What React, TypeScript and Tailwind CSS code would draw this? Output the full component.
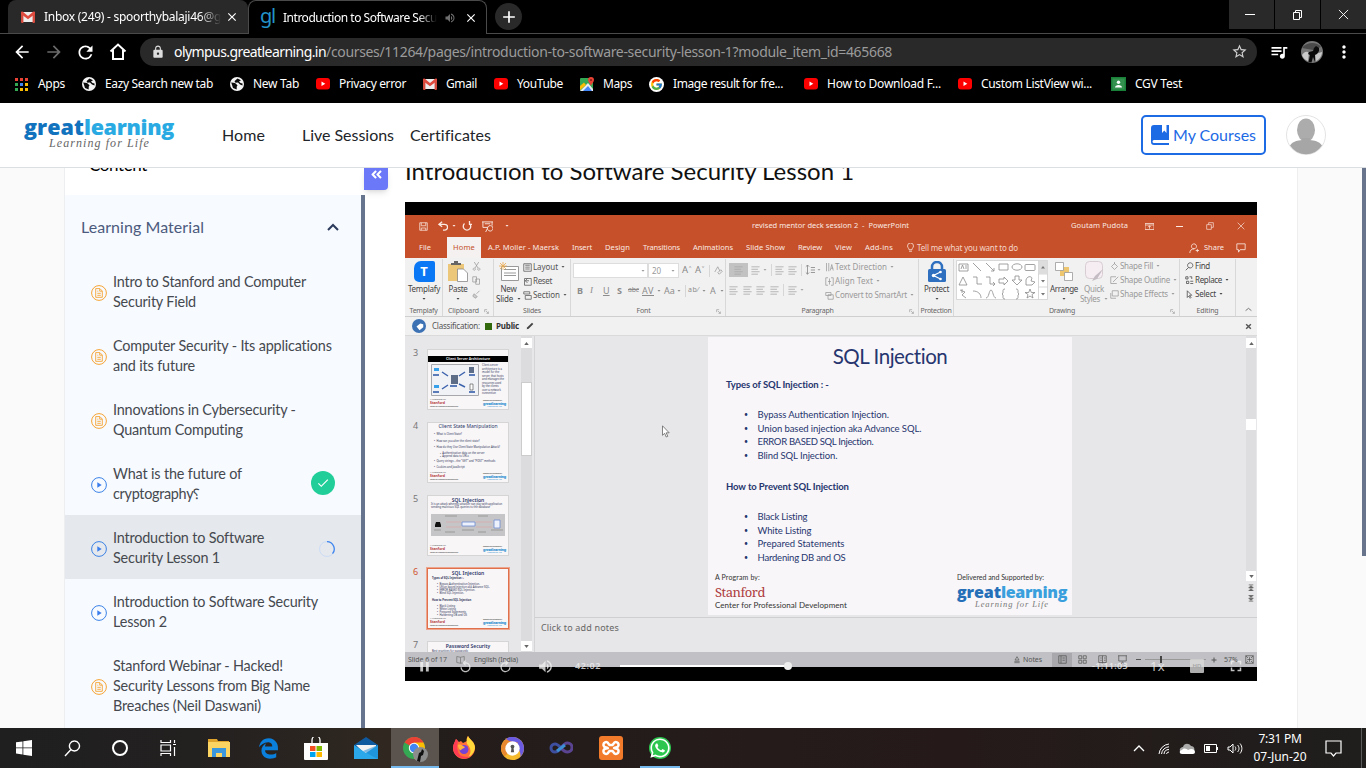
import { useLayoutEffect, useRef, useState } from "react";
import type { ReactNode } from "react";
import {
  MdArrowBack, MdArrowForward, MdRefresh, MdLock, MdStarBorder, MdQueueMusic, MdMoreVert,
  MdClose, MdAdd, MdVolumeUp, MdPause, MdReplay, MdFullscreen, MdCheck,
} from "react-icons/md";
import { FcGoogle } from "react-icons/fc";
import { FaAngleDoubleLeft, FaWhatsapp, FaEdgeLegacy } from "react-icons/fa";

/* Single line of text whose tracking is computed so that it fills a given width. */
function Fit({ w, className = "", children }: { w: number; className?: string; children: string }) {
  const ref = useRef<HTMLSpanElement>(null);
  const [tracking, setTracking] = useState(0);
  useLayoutEffect(() => {
    const el = ref.current;
    if (!el) return;
    const prev = el.style.letterSpacing;
    el.style.letterSpacing = "0px";
    const natural = el.getBoundingClientRect().width;
    el.style.letterSpacing = prev;
    setTracking((w - natural) / children.length);
  }, [w, children]);
  return (
    <span ref={ref} className={`inline-block w-max shrink-0 whitespace-pre ${className}`} style={{ letterSpacing: `${tracking}px` }}>
      {children}
    </span>
  );
}

/* Line icon on a small grid. */
function Ico({ d, box = "0 0 12 12", className = "", sw = 1, fill = "none" }: { d: string; box?: string; className?: string; sw?: number; fill?: string }) {
  return (
    <svg viewBox={box} className={`shrink-0 ${className}`} fill={fill} stroke="currentColor" strokeWidth={sw}>
      <path d={d} />
    </svg>
  );
}

/* ---------- Browser ---------- */

const GmailIcon = () => (
  <svg viewBox="0 0 14 12" className="h-3 w-3.5 shrink-0">
    <path d="M1 1h12v10H1z" fill="#eee" />
    <path d="M0 1.2h2.4V12H1a1 1 0 0 1-1-1zM11.6 1.2H14V11a1 1 0 0 1-1 1h-1.4z" fill="#d54b3d" />
    <path d="M0 1.5C0 .5 1 .2 1.8.8L7 5 12.200.8C13 .2 14 .5 14 1.500V3L7 8.200 0 3z" fill="#e04b3f" />
  </svg>
);
const YtIcon = () => (
  <svg viewBox="0 0 14 12" className="h-3 w-3.5 shrink-0">
    <rect width="14" height="11.500" rx="3" fill="#f00" />
    <path d="M5.500 3.500v4.600L9.300 5.800z" fill="#fff" />
  </svg>
);
const GlobeIcon = () => (
  <svg viewBox="0 0 14 14" className="size-3.5 shrink-0">
    <circle cx="7" cy="7" r="7" fill="#f4f4f4" />
    <path d="M1.200 5.500 5 6l2.500 2.200-.8 1.500v2.800L3 11zM7.500 1.500 5.500 3.200 4.500 4.200l1 1.600 2.500-.2L10 7.500l2.500 1V6.500L10.500 6 9 4.500 11 3.300z" fill="#0a0a0a" />
  </svg>
);
const MapsIcon = () => (
  <svg viewBox="0 0 14 14" className="size-3.5 shrink-0">
    <rect y="1" width="13" height="13" rx="1" fill="#34a853" />
    <path d="M0 14 8 6l5 6v2z" fill="#e8eaed" />
    <path d="M3 14 8 9l4 5z" fill="#4285f4" />
    <path d="M0 9 4 5.500 6 8 0 13z" fill="#fbbc04" />
    <path d="M11 0a3 3 0 0 1 3 3c0 2-2 3-3 6-1-3-3-4-3-6a3 3 0 0 1 3-3z" fill="#ea4335" />
    <circle cx="11" cy="3" r="1" fill="#7b1d15" />
  </svg>
);
const AppsIcon = () => (
  <svg viewBox="0 0 13 13" className="size-[13px] shrink-0">
    {["#ea4335", "#ea4335", "#ea4335", "#34a853", "#4285f4", "#fbbc04", "#34a853", "#fbbc04", "#fbbc04"].map((c, i) => (
      <rect key={i} x={(i % 3) * 5} y={Math.floor(i / 3) * 5} width="3" height="3" fill={c} />
    ))}
  </svg>
);
const ClassIcon = () => (
  <svg viewBox="0 0 15 14" className="h-3.5 w-[15px] shrink-0">
    <rect width="15" height="14" fill="#188038" />
    <rect x="1.500" y="1.500" width="12" height="11" fill="#34904f" />
    <circle cx="7.500" cy="5.200" r="1.700" fill="#fff" />
    <path d="M4 10.500c0-3.500 7-3.500 7 0z" fill="#fff" />
  </svg>
);

const bookmarks: { icon: ReactNode; text: string; w: number; cell: string; gap: string }[] = [
  { icon: <AppsIcon />, text: "Apps", w: 27, cell: "w-[67px]", gap: "gap-2.5" },
  { icon: <GlobeIcon />, text: "Eazy Search new tab", w: 108, cell: "w-[148px]", gap: "gap-[9px]" },
  { icon: <GlobeIcon />, text: "New Tab", w: 46, cell: "w-[86px]", gap: "gap-[9px]" },
  { icon: <YtIcon />, text: "Privacy error", w: 67, cell: "w-[107px]", gap: "gap-[9px]" },
  { icon: <GmailIcon />, text: "Gmail", w: 31, cell: "w-[71px]", gap: "gap-[9px]" },
  { icon: <YtIcon />, text: "YouTube", w: 46, cell: "w-[86px]", gap: "gap-[9px]" },
  { icon: <MapsIcon />, text: "Maps", w: 29, cell: "w-[69px]", gap: "gap-[9px]" },
  { icon: <span className="flex size-[15px] items-center justify-center rounded-full bg-white"><FcGoogle size={13} /></span>, text: "Image result for fre...", w: 110, cell: "w-[155px]", gap: "gap-[9px]" },
  { icon: <YtIcon />, text: "How to Download F...", w: 114, cell: "w-[154px]", gap: "gap-[9px]" },
  { icon: <YtIcon />, text: "Custom ListView wi...", w: 111, cell: "w-[153px]", gap: "gap-[9px]" },
  { icon: <ClassIcon />, text: "CGV Test", w: 47, cell: "w-[100px]", gap: "gap-[9px]" },
];

const Photo = ({ className }: { className: string }) => (
  <svg viewBox="0 0 22 22" className={`shrink-0 ${className}`}>
    <circle cx="11" cy="11" r="11" fill="#777" />
    <path d="M1 7C5 1 16 0 20 6L12 9z" fill="#4a4a4a" />
    <path d="M1 14c3-4 5-4 7-2l-1 8c-3-1-5-3-6-6zM14 13l7-2c0 4-3 8-6 9z" fill="#c9c9c9" />
    <path d="M7.500 21 9 14l-2-1 1-2 4-1 1-3 2-2 3 2v3l-2 3-2 1v7l-2-5-1.500 5.500z" fill="#0a0a0a" />
  </svg>
);

function Browser() {
  return (
    <div className="flex h-[103px] shrink-0 flex-col bg-black font-['Noto_Sans',sans-serif] text-white">
      <div className="flex h-[34px] items-stretch border-b border-[#4a4a4a] pl-2">
        <div className="flex w-60 items-center rounded-t-lg bg-[#292929] pl-[13px]">
          <GmailIcon />
          <div className="ml-[9px] w-[177px] overflow-hidden text-[12px] leading-4 [mask-image:linear-gradient(to_right,black_88%,transparent)]">
            <Fit w={177}>Inbox (249) - spoorthybalaji46@g</Fit>
          </div>
          <MdClose size={14} className="ml-[4px] shrink-0" />
        </div>
        <div className="-mb-px flex w-[239px] items-center rounded-t-lg border border-b-0 border-[#4a4a4a] bg-black pl-[11px]">
          <div className="flex h-5 w-[15px] shrink-0 text-[20px] leading-[16px] text-[#2392c9]"><Fit w={15}>gl</Fit></div>
          <div className="ml-[8px] w-[154px] overflow-hidden text-[12px] leading-4 [mask-image:linear-gradient(to_right,black_88%,transparent)]">
            <Fit w={154}>Introduction to Software Secu</Fit>
          </div>
          <MdVolumeUp size={12} className="ml-[7px] shrink-0 text-[#6e6e6e]" />
          <MdClose size={14} className="ml-[8px] shrink-0" />
        </div>
        <div className="ml-2 mt-[3px] flex size-[27px] items-center justify-center rounded-full bg-[#292929]">
          <MdAdd size={20} />
        </div>
        <div className="ml-auto flex h-[29px] gap-px">
          <div className="flex w-[45px] items-center justify-center bg-[#292929]"><div className="mr-[3px] h-px w-[10px] bg-white" /></div>
          <div className="flex w-[45px] items-center justify-center bg-[#292929]"><Ico d="M1.500 3.500h6v7h-6zM3.500 3.500v-2h6v7h-2" className="size-3" /></div>
          <div className="flex w-[45px] items-center justify-center bg-[#292929]"><Ico d="M1 1l10 10M11 1 1 11" className="mr-px size-[11px]" /></div>
        </div>
      </div>
      <div className="flex h-9 items-center pl-3">
        <MdArrowBack size={20} />
        <MdArrowForward size={20} className="ml-3 text-[#6b6b6b]" />
        <MdRefresh size={21} className="ml-[11px]" />
        <Ico d="M1.500 8.500 9 1.500l7.500 7M4 7v9h10V7" box="0 0 18 18" sw={2} className="ml-[13px] size-[18px]" />
        <div className="ml-[13px] flex h-7 w-[1117px] items-center rounded-full bg-[#292929] pb-px pl-[11px] text-[14px]">
          <MdLock size={14} className="text-[#dcdcdc]" />
          <Fit w={152} className="ml-[9px]">olympus.greatlearning.in</Fit>
          <Fit w={566} className="text-[#9b9b9b]">/courses/11264/pages/introduction-to-software-security-lesson-1?module_item_id=465668</Fit>
          <MdStarBorder size={17} className="ml-auto mr-[9px] text-[#d0d0d0]" />
        </div>
        <MdQueueMusic size={20} className="ml-3" />
        <Photo className="ml-[12px] size-[22px]" />
        <MdMoreVert size={20} className="ml-[11px]" />
      </div>
      <div className="flex h-[33px] items-center pb-[5px] pl-[15px] text-[12px]">
        {bookmarks.map((b, i) => (
          <div key={i} className={`flex shrink-0 items-center ${b.cell} ${b.gap}`}>
            {b.icon}
            <Fit w={b.w}>{b.text}</Fit>
          </div>
        ))}
      </div>
    </div>
  );
}

/* ---------- Site header and sidebar ---------- */

function SiteHeader() {
  return (
    <header className="z-10 flex h-[65px] shrink-0 items-start border-b border-[#dcdfe2] bg-white text-[16px] text-[#212529]">
      <div className="ml-6 mt-[13px] flex w-[152px] flex-col">
        <div className="flex h-[21px] text-[21.500px] leading-[21px] font-extrabold font-['Open_Sans',sans-serif]">
          <Fit w={60} className="text-[#1173bd]">great</Fit>
          <Fit w={90} className="text-[#29aae2]">learning</Fit>
        </div>
        <div className="ml-[25px] flex h-[12px] text-[12px] leading-[12px] text-[#666] italic font-['Liberation_Serif',serif]">
          <Fit w={101}>Learning for Life</Fit>
        </div>
      </div>
      <nav className="ml-[46px] mt-5 flex leading-6">
        <Fit w={43}>Home</Fit>
        <Fit w={92} className="ml-[37px]">Live Sessions</Fit>
        <Fit w={81} className="ml-4">Certificates</Fit>
      </nav>
      <div className="ml-auto mt-3 flex h-10 w-[125px] items-center rounded-[5px] border-2 border-[#1d6ae5] pl-2 text-[#1d6ae5]">
        <svg viewBox="0 0 18 20" className="h-5 w-[18px]" fill="#1d6ae5">
          <path d="M3 0h8v8l2.300-2.500L15.500 8V0H18v15H3a1.500 1.500 0 0 0 0 3h15v2H3a3 3 0 0 1-3-3V3a3 3 0 0 1 3-3z" />
        </svg>
        <Fit w={83} className="ml-1">My Courses</Fit>
      </div>
      <svg viewBox="0 0 40 40" className="ml-5 mr-10 mt-3 size-10">
        <circle cx="20" cy="20" r="19.500" fill="#fff" stroke="#e3e3e3" />
        <ellipse cx="20" cy="15" rx="9" ry="11.500" fill="#acacac" />
        <path d="M16 23v2c-4 .5-9 1-12 5.500a19 19 0 0 0 32 0c-3-4.500-8-5-12-5.500v-2z" fill="#a6a6a6" />
      </svg>
    </header>
  );
}

const DocIcon = () => (
  <svg viewBox="0 0 16 16" className="size-4 shrink-0" fill="none" stroke="#f6a433">
    <circle cx="8" cy="8" r="7.400" />
    <path d="M4.700 3.600h4.200l2.400 2.400v6.300H4.700zM8.700 3.800V6.200H11M6.300 6.200h1M6.300 8.300h3.500M6.300 10.300h3.500" strokeWidth=".9" />
  </svg>
);
const PlayIcon = () => (
  <svg viewBox="0 0 16 16" className="size-4 shrink-0" fill="none" stroke="#3b82e6">
    <circle cx="8" cy="8" r="7.400" />
    <path d="M6.300 5.300v5.400L10.700 8z" fill="#3b7ded" stroke="none" />
  </svg>
);

const lessons: { lines: [string, number][]; doc?: boolean; state?: "done" | "busy" }[] = [
  { lines: [["Intro to Stanford and Computer", 193], ["Security Field", 83]], doc: true },
  { lines: [["Computer Security - Its applications", 219], ["and its future", 82]], doc: true },
  { lines: [["Innovations in Cybersecurity -", 183], ["Quantum Computing", 130]], doc: true },
  { lines: [["What is the future of", 129], ["cryptography⸮", 86]], state: "done" },
  { lines: [["Introduction to Software", 151], ["Security Lesson 1", 107]], state: "busy" },
  { lines: [["Introduction to Software Security", 205], ["Lesson 2", 54]] },
  { lines: [["Stanford Webinar - Hacked!", 170], ["Security Lessons from Big Name", 197], ["Breaches (Neil Daswani)", 148]], doc: true },
];

function Sidebar() {
  return (
    <aside className="flex w-[301px] shrink-0 flex-col border-l border-[#eceef0] bg-white">
      <div className="flex h-[27px] shrink-0 items-start overflow-hidden pl-6">
        <Fit w={58} className="-mt-[15px] text-[17px] leading-6 text-black">Content</Fit>
      </div>
      <div className="flex grow border-r-4 border-[#67748e] bg-[#f7faff]">
        <div className="grow">
          <div className="flex h-16 items-center pl-4 pr-[22px] text-[16px] text-[#4c5b7d]">
            <Fit w={123}>Learning Material</Fit>
            <Ico d="M1 7 6 2l5 5" box="0 0 12 9" sw={2} className="ml-auto h-[9px] w-3 text-[#2c3a5c]" />
          </div>
          {lessons.map((l, i) => (
            <div key={i} className={`flex items-center pb-[11px] pl-[26px] pt-[13px] ${l.state === "busy" ? "bg-[#e5e8ec]" : ""}`}>
              <div className="mt-px">{l.doc ? <DocIcon /> : <PlayIcon />}</div>
              <div className="ml-1.5 flex flex-col text-[14.400px] leading-5 text-[#45494f]">
                {l.lines.map(([t, w]) => <div key={t} className="h-5"><Fit w={w}>{t}</Fit></div>)}
              </div>
              {l.state === "done" && (
                <div className="-mt-[3px] ml-auto mr-[26px] flex size-6 items-center justify-center rounded-full bg-[#21ce99] text-white">
                  <MdCheck size={14} />
                </div>
              )}
              {l.state === "busy" && (
                <svg viewBox="0 0 16 16" className="ml-auto mr-[26px] mt-px size-4" fill="none">
                  <circle cx="8" cy="8" r="7.500" stroke="#cddcf6" />
                  <path d="M8 .7a7.300 7.300 0 0 1 5.500 12" stroke="#3f86ee" strokeWidth="1.300" />
                </svg>
              )}
            </div>
          ))}
        </div>
      </div>
    </aside>
  );
}

/* ---------- Video: slide deck editor ---------- */

function Group({ w, label, lw, launcher, children }: { w: string; label: string; lw: number; launcher?: boolean; children: ReactNode }) {
  return (
    <div className={`flex h-[57px] shrink-0 flex-col border-r border-[#d8d8d8] ${w}`}>
      <div className="flex h-[47px]">{children}</div>
      <div className="flex h-[10px] items-center text-[7px] leading-[10px] text-[#666]">
        <span className="flex grow justify-center"><Fit w={lw}>{label}</Fit></span>
        {launcher && <Ico d="M1 5V1h4M3 3l4 4M7 4v3H4" box="0 0 8 8" className="mr-1 size-[5px] text-[#999]" />}
      </div>
    </div>
  );
}
const Down = ({ className = "text-[#666]" }: { className?: string }) => (
  <Ico d="M0 0h6L3 3.500z" box="0 0 6 4" fill="currentColor" sw={0} className={`h-[2px] w-[4px] ${className}`} />
);
function Big({ icon, label, w, sub, className = "text-[#444]" }: { icon: ReactNode; label: string; w: number; sub?: [string, number]; className?: string }) {
  return (
    <div className={`flex flex-col items-center text-[8px] leading-[10px] ${className}`}>
      <div className="flex h-[23px] items-center">{icon}</div>
      <Fit w={w} className="mt-px">{label}</Fit>
      <div className="flex h-[10px] items-center gap-1">{sub && <Fit w={sub[1]}>{sub[0]}</Fit>}<Down className="" /></div>
    </div>
  );
}
function Row({ icon, label, w, arrow, className = "text-[#555]" }: { icon: string; label: string; w: number; arrow?: boolean; className?: string }) {
  return (
    <div className={`flex h-[14px] items-center text-[8px] leading-[14px] ${className}`}>
      <Ico d={icon} className="mr-px size-[9px]" />
      <Fit w={w}>{label}</Fit>
      {arrow && <span className="ml-[3px] flex"><Down className="" /></span>}
    </div>
  );
}
const Sep = ({ className = "" }: { className?: string }) => <div className={`h-[12px] w-px shrink-0 bg-[#d6d6d6] ${className}`} />;
const Lines = ({ className = "" }: { className?: string }) => (
  <Ico d="M0 1h10M0 4h8M0 7h10M0 10h8" box="0 0 10 11" className={`h-[9px] w-[9px] text-[#aaa] ${className}`} />
);

function Ribbon() {
  const page = "M1 1h10v10H1zM3 3h6M3 5.500h6M3 8h6";
  return (
    <div className="flex h-[59px] shrink-0 border-b border-[#cfcfcf] bg-[#f2f1f1] pt-px">
      <Group w="w-[38px]" label="Templafy" lw={28}>
        <div className="pl-[3px] pt-px">
          <Big icon={<div className="flex size-[21px] items-center justify-center rounded-bl-[5px] rounded-br-[2px] rounded-tl-[7px] rounded-tr-[2px] bg-[#0a78f5] text-[13px] font-bold leading-none text-white">T</div>} label="Templafy" w={32} />
        </div>
      </Group>
      <Group w="w-[51px]" label="Clipboard" lw={31} launcher>
        <div className="flex gap-2 pl-[5px] pt-px">
          <Big
            icon={
              <svg viewBox="0 0 20 21" className="h-[21px] w-5">
                <path d="M0 3h16v17H0z" fill="#ecc679" />
                <path d="M3 4V2h3V0h4v2h3v2z" fill="#666" />
                <path d="M9.500 8h6l4 4v8.500h-10z" fill="#fff" stroke="#888" strokeWidth=".8" />
              </svg>
            }
            label="Paste" w={19}
          />
          <div className="-ml-1 flex flex-col text-[#9a9a9a]">
            <Ico d="M3 0l5 8M9 0 4 8M3 8a1.500 1.500 0 1 0 .1 0M9 8a1.500 1.500 0 1 0 .1 0" className="mt-[2px] size-[9px]" />
            <Ico d="M1 1h5v7H1zM5 4h5v7H5z" className="mt-[5px] size-[9px]" />
            <Ico d="M10 1 6 5M3 5l4 4-3 2-3-3z" fill="#ccc" className="mt-[5px] size-[9px]" />
          </div>
        </div>
      </Group>
      <Group w="w-[77px]" label="Slides" lw={18}>
        <div className="flex gap-[2px] pl-[2px] pt-px">
          <Big
            icon={
              <svg viewBox="0 0 20 20" className="size-5" fill="none" stroke="#999">
                <path d="M2.500 4.500h17v14h-17z" fill="#fff" />
                <path d="M5 7.500h12M5 11h12M5 13.500h12" strokeWidth="1.200" />
                <path d="M4 0v8M0 4h8M1 1l6 6M7 1 1 7" stroke="#eaa84b" strokeWidth=".8" />
              </svg>
            }
            label="New" w={16} sub={["Slide", 17]}
          />
          <div className="flex flex-col">
            <Row icon={page} label="Layout" w={25} arrow />
            <Row icon="M2 2h9v9H2zM6 8 3 5l3-3M3 5h5" label="Reset" w={19} />
            <Row icon="M1 1h8v3H1zM3 6h8v5H3z" label="Section" w={27} arrow />
          </div>
        </div>
      </Group>
      <Group w="w-[155px]" label="Font" lw={14} launcher>
        <div className="flex flex-col pl-[2px] pt-px text-[#999]">
          <div className="mt-[3px] flex h-[15px] items-center">
            <div className="flex h-[15px] w-[75px] items-center justify-end border border-[#ddd] bg-white pr-[2px]"><Down className="" /></div>
            <div className="flex h-[15px] w-[31px] items-center justify-between border border-[#ddd] bg-white px-[3px] text-[8px]">20<Down className="" /></div>
            <Fit w={23} className="ml-[3px] text-[9.500px] text-[#888]">A˄ A˅</Fit>
            <Sep className="ml-[4px]" />
            <Ico d="M1 8 5 1l3 6M5 9l4-4 2 2-4 4z" className="ml-[4px] size-[9px]" />
          </div>
          <div className="mt-[4px] flex h-[17px] items-center text-[9px] text-[#8c8c8c]">
            <b className="ml-[4px] w-[13px]">B</b>
            <i className="w-[13px] font-['Liberation_Serif',serif]">I</i>
            <u className="w-[14px]">U</u>
            <b className="w-[11px]">S</b>
            <Fit w={11} className="text-[7px] line-through">abc</Fit>
            <Fit w={12} className="ml-[3px] underline">AV</Fit>
            <span className="ml-[3px]"><Down className="" /></span>
            <Fit w={11} className="ml-[3px]">Aa</Fit>
            <span className="ml-[2px]"><Down className="" /></span>
            <Sep className="ml-[4px]" />
            <Fit w={11} className="ml-[2px] text-[7px]">ab⁄</Fit>
            <span className="ml-[3px]"><Down className="" /></span>
            <span className="ml-[4px] text-[9px]">A</span>
            <span className="ml-[4px]"><Down className="" /></span>
          </div>
        </div>
      </Group>
      <Group w="w-[193px]" label="Paragraph" lw={32} launcher>
        <div className="flex w-[99px] flex-col pl-[3px] pt-px text-[#a5a5a5]">
          <div className="mt-[3px] flex h-[14px] items-center">
            <div className="flex h-[14px] w-[19px] items-center justify-center bg-[#c2c2c2]"><Lines className="text-[#888]" /></div>
            <Lines className="ml-[3px]" /><span className="ml-[3px]"><Down className="" /></span>
            <Sep className="ml-[4px]" />
            <Lines className="ml-[3px]" /><Lines className="ml-[4px]" />
            <Sep className="ml-[4px]" />
            <Ico d="M3 0v11M1 2l2-2 2 2M1 9l2 2 2-2M7 3h5M7 6h5M7 9h5" className="ml-[3px] size-[10px] text-[#888]" />
            <span className="ml-[2px]"><Down className="" /></span>
          </div>
          <div className="mt-[6px] flex h-[14px] items-center">
            <Lines /><Lines className="ml-[5px]" /><Lines className="ml-[4px]" /><Lines className="ml-[5px]" />
            <Sep className="ml-[4px]" />
            <Lines className="ml-[4px]" /><span className="ml-[3px]"><Down className="" /></span>
          </div>
        </div>
        <div className="flex flex-col pt-px">
          <Row className="text-[#999]" icon="M2 0v11M5 0v11M7 10 9 2l2 8M8 7h3" label="Text Direction" w={52} arrow />
          <Row className="text-[#999]" icon="M1 1v10h3M1 1h3M11 1v10H8M11 1H8M6 2v8M4 6h4" label="Align Text" w={38} arrow />
          <Row className="text-[#999]" icon="M1 2h7v4H1zM4 5h7v6H4z" label="Convert to SmartArt" w={72} arrow />
        </div>
      </Group>
      <Group w="w-[35px]" label="Protection" lw={31}>
        <div className="pl-[5px] pt-px">
          <Big
            icon={
              <svg viewBox="0 0 18 22" className="h-[22px] w-[18px]">
                <path d="M4 10V6a5 5 0 0 1 10 0v4" fill="none" stroke="#2f6fc0" strokeWidth="2.500" />
                <rect y="8" width="18" height="13" rx="1.500" fill="#2f6fc0" />
                <path d="M12.500 11 5.500 14.500l7 3.500" fill="none" stroke="#fff" strokeWidth="1.300" />
                <circle cx="5.500" cy="14.500" r="1.700" fill="#fff" /><circle cx="12.500" cy="11" r="1.300" fill="#fff" /><circle cx="12.500" cy="18" r="1.300" fill="#fff" />
              </svg>
            }
            label="Protect" w={25}
          />
        </div>
      </Group>
      <Group w="w-[226px]" label="Drawing" lw={26} launcher>
        <svg viewBox="0 0 92 40" className="ml-[2px] mt-px h-10 w-[92px] shrink-0" fill="none" stroke="#8a8a8a" strokeWidth=".8">
          <path d="M.5.5h91v39H.5z" fill="#fff" stroke="#cfcfcf" />
          <path d="M82.500.5v39M82.500 14h9M82.500 27h9" stroke="#cfcfcf" />
          <path d="M82.500 1h9v13h-9z" fill="#ddd" stroke="none" />
          <path d="M85 8.500h4l-2-2.500zM85 20h4l-2 2.500zM85 33h4l-2 2.500z" fill="#777" stroke="none" />
          <path d="M3 4h9v7H3zM5 9l1.500-4L8 9M9 6h2M9 8h2M17 3l8 8M30 3l8 8v-3M38 11h-3M43 4h9v6h-9zM70 4.500h8a1 1 0 0 1 1 1v4a1 1 0 0 1-1 1h-8a1 1 0 0 1-1-1v-4a1 1 0 0 1 1-1z" />
          <ellipse cx="61" cy="7" rx="5" ry="3.200" />
          <path d="M3 25l4-8 4 8zM17 17h4v7h5M30 17h4v7h5M37 22l2 2-2 2M43 19h5v-2l4 4-4 4v-2h-5zM59 16h4v4h3l-5 5-5-5h3zM70 20c1-4 5-4 6-2l-1 3 4 1-3 3h-6z" />
          <path d="M4 30l5 2-3 3 4 3M6 29v4M17 31c5 0 8 3 8 7M30 38c3 0 3-8 5-8s2 8 5 8M49 29c-2 0-2 1-2 2v2l-1 1 1 1v2c0 1 0 2 2 2M60 29c2 0 2 1 2 2v2l1 1-1 1v2c0 1 0 2-2 2M74 29l1.300 3.500H79l-3 2 1 3.500-3-2-3 2 1-3.500-3-2h3.700z" />
        </svg>
        <div className="ml-[2px] flex gap-[2px] pt-px">
          <Big
            icon={
              <svg viewBox="0 0 18 19" className="h-[19px] w-[18px]" strokeWidth=".8">
                <path d="M5 5h9v9H5z" fill="#edc66f" />
                <path d="M.5.5h8v8h-8zM9.500 10.500h8v8h-8z" fill="#fff" stroke="#999" />
              </svg>
            }
            label="Arrange" w={28}
          />
          <Big
            className="text-[#999]"
            icon={
              <svg viewBox="0 0 19 21" className="h-[21px] w-[19px]">
                <rect x=".5" y=".5" width="17" height="17" rx="4" fill="#f5edf2" stroke="#d7cdd3" />
                <path d="M18 8 10 15l-3 5 5-2z" fill="#c4bcc2" />
              </svg>
            }
            label="Quick" w={20} sub={["Styles", 20]}
          />
        </div>
        <div className="ml-[2px] flex flex-col">
          <Row className="text-[#999]" icon="M2 6l4-4 4 4-4 4zM6 0v3" label="Shape Fill" w={33} arrow />
          <Row className="text-[#999]" icon="M1 1h7M1 1v9h8M4 8l7-7" label="Shape Outline" w={50} arrow />
          <Row className="text-[#999]" icon="M3 1h8v7H3zM1 4v7h7" label="Shape Effects" w={48} arrow />
        </div>
      </Group>
      <Group w="w-[56px]" label="Editing" lw={22}>
        <div className="flex flex-col pl-[5px]">
          <Row className="text-[#444]" icon="M7 1a3.500 3.500 0 1 1-.1 0M5 7l-4 4" label="Find" w={15} />
          <Row className="text-[#444]" icon="M1 1h3v3H1zM6 1h3v3M2 7h3v3H2zM7 7h4M7 10h4" label="Replace" w={27} arrow />
          <Row className="text-[#444]" icon="M3 1v9l2-2 2 3 1-1-2-3h3z" label="Select" w={21} arrow />
        </div>
      </Group>
      <Ico d="M1 6l5-4 5 4" box="0 0 12 8" sw={1.500} className="mb-1 ml-[9px] mt-auto h-[5px] w-[7px] text-[#666]" />
    </div>
  );
}

const tabs: [string, number, string][] = [
  ["Insert", 20, "ml-[13px]"], ["Design", 25, "ml-[13px]"], ["Transitions", 37, "ml-[13px]"], ["Animations", 40, "ml-[13px]"],
  ["Slide Show", 39, "ml-[13px]"], ["Review", 24, "ml-[13px]"], ["View", 17, "ml-[13px]"], ["Add-ins", 28, "ml-[13px]"],
];

function TitleBar() {
  return (
    <div className="h-[43px] shrink-0 bg-[#c5502a] text-[7.500px] text-[#fbe9e2]">
      <div className="flex h-[22px] items-center pl-[14px]">
        <Ico d="M1 1h10v10H1zM3 1v4h6V1M3 11V8h6v3" className="size-[9px]" />
        <Ico d="M5 1 1 4l4 3M1 4h7a3 3 0 0 1 0 7H6" sw={1.600} className="ml-[10px] size-[10px]" />
        <span className="ml-[4px]"><Down className="" /></span>
        <Ico d="M3 3a4.500 4.500 0 1 0 6 0M9 0v4h3" sw={1.600} className="ml-[6px] size-[10px]" />
        <Ico d="M0 1h12M1 1v6h5M11 1v4M3 3h6M6 8l-2 4M9 5a3 3 0 1 1-.1 0" className="ml-[10px] size-[11px]" />
        <span className="ml-[12px]"><Down className="" /></span>
        <Fit w={157} className="ml-[243px]">revised mentor deck session 2  -  PowerPoint</Fit>
        <Fit w={57} className="ml-[162px]">Goutam Pudota</Fit>
        <Ico d="M0 2h12v8H0zM0 4h12M6 9V5M4 7l2-2 2 2" className="ml-[17px] size-[9px]" />
        <div className="ml-[22px] h-px w-[7px] bg-[#fbe9e2]" />
        <Ico d="M1 4h7v7H1zM4 4V1h7v7H8" className="ml-[23px] size-[8px]" />
        <Ico d="M1 1l10 10M11 1 1 11" className="ml-[23px] size-[8px]" />
      </div>
      <div className="flex h-[21px] items-center pl-[14px]">
        <Fit w={12}>File</Fit>
        <div className="ml-[16px] flex h-[21px] w-[34px] items-center justify-center bg-[#f4f1f0] text-[#c5502a]"><Fit w={22}>Home</Fit></div>
        <Fit w={71} className="ml-[7px]">A.P. Moller - Maersk</Fit>
        {tabs.map(([t, w, m]) => <Fit key={t} w={w} className={m}>{t}</Fit>)}
        <Ico d="M4 9C4 7 2 6 2 4a4 4 0 0 1 8 0c0 2-2 3-2 5zM4 11h4" className="ml-[13px] size-[9px]" />
        <Fit w={101} className="ml-[2px] text-[8px] text-[#f6d5c9]">Tell me what you want to do</Fit>
        <Ico d="M6 1a3 3 0 1 1-.1 0M1 12c0-3 2-5 5-5M8 9h4M10 7v4" className="ml-[171px] size-[10px]" />
        <Fit w={20} className="ml-[5px]">Share</Fit>
        <Ico d="M1 1h10v7H5l-2 3V8H1z" className="ml-[12px] size-[10px]" />
      </div>
    </div>
  );
}

function ThumbFooter() {
  return (
    <div className="mt-auto flex h-[11px] shrink-0 items-end justify-between px-[2px] pb-px text-[2.500px] leading-[3px] text-[#444]">
      <div className="flex flex-col"><span>A Program by</span><span className="text-[3.500px] font-bold leading-[4px] text-[#b6383c]">Stanford</span><Fit w={28} className="text-[2px]">Center for Professional Development</Fit></div>
      <div className="flex flex-col text-[#2a8fd0]"><Fit w={19} className="text-[2px] text-[#444]">Delivered and Supported by</Fit><Fit w={23} className="text-[3.800px] font-extrabold leading-[4px]">greatlearning</Fit><span className="text-center text-[2px] italic leading-[2px]">Learning for Life</span></div>
    </div>
  );
}
function Thumb({ n, title, active, children }: { n: number; title?: string; active?: boolean; children: ReactNode }) {
  return (
    <div className="flex h-[73px] shrink-0 items-start pl-[8px]">
      <span className={`w-[14px] text-[9px] leading-[9px] ${active ? "text-[#d0532f]" : "text-[#777]"}`}>{n}</span>
      <div className={`mt-px flex h-[61px] w-[82px] flex-col bg-[#f8f6f7] ${active ? "border border-[#e0704c] outline outline-[#eda58d]" : "border border-[#d5d5d5]"}`}>
        {title && <div className="shrink-0 pt-[1px] text-center text-[5px] font-semibold leading-[6px] text-[#2c3768]">{title}</div>}
        {children}
      </div>
    </div>
  );
}
const Tiny = ({ items, className = "" }: { items: string[]; className?: string }) => (
  <div className={`flex shrink-0 flex-col whitespace-pre text-[2.700px] text-[#2f3558] ${className}`}>{items.map((t) => <span key={t}>{t}</span>)}</div>
);

function Thumbs() {
  return (
    <div className="flex w-[116px] shrink-0 flex-col overflow-hidden pt-[12px]">
      <Thumb n={3}>
        <div className="mt-[6px] h-[6px] shrink-0 bg-black text-center text-[3.500px] font-semibold leading-[6px] text-white">Client Server Architecture</div>
        <div className="mt-[2px] flex h-8 shrink-0">
          <svg viewBox="0 0 48 32" className="ml-[3px] h-8 w-12 shrink-0">
            <path d="M.5.5h47v31H.5z" fill="#f1f2f6" stroke="#a6a8ae" />
            <path d="M11 8l6 4M28 12l6-4M11 25l6-4M28 20l6 3" stroke="#3d63ad" strokeWidth="1.500" />
            <path d="M3 4h5v3H3zM3 21h5v3H3z" fill="#37a0ea" /><path d="M2 10h6v2H2zM2 27h6v2H2zM38 10h6v2h-6zM38 27h6v2h-6zM19 21h7v2h-7z" fill="#5b7ab8" />
            <path d="M38 3h5v6h-5zM20 11h7v9h-7z" fill="#5d6d88" /><path d="M39 20h3v6h-3z" fill="#fff" stroke="#444" strokeWidth=".6" />
          </svg>
          <Tiny className="ml-[3px] w-[25px] leading-[3.500px]" items={["Client-server", "architecture is a", "model for the", "server, that hosts", "and manages the", "resources used", "by the clients", "over a network", "connection"]} />
        </div>
        <ThumbFooter />
      </Thumb>
      <Thumb n={4}>
        <div className="shrink-0 text-center text-[5px] leading-[7px] text-[#2c3768]">Client State Manipulation</div>
        <Tiny className="mt-px pl-[6px] leading-[6.500px]" items={["•  What is Client State?", "•  How can you alter the client state?", "•  How do they Use Client State Manipulation Attack?"]} />
        <Tiny className="mt-px pl-[12px] leading-[3px]" items={["▪  Authentication data on the server", "▪  Append data to URLs"]} />
        <Tiny className="pl-[6px] leading-[6px]" items={["•  Query strings – the \"GET\" and \"POST\" methods", "•  Cookies and JavaScript"]} />
        <ThumbFooter />
      </Thumb>
      <Thumb n={5} title="SQL Injection">
        <Tiny className="px-[3px] leading-[3px]" items={["It is an attack whereby attacker can play with application", "sending malicious SQL queries to the database"]} />
        <svg viewBox="0 0 74 22" className="mx-auto mt-[5px] h-[22px] w-[74px] shrink-0">
          <path d="M0 0h74v22H0z" fill="#c5c5c7" />
          <path d="M5 8h4l1 3H4zM4 13h6v-2H4z" fill="#111" />
          <path d="M15 8h15M45 8h16M15 13h15M45 13h16" stroke="#dda3a8" strokeWidth=".6" />
          <path d="M31 8h13v4H31zM63 6h6v8h-6z" fill="#edf1fb" stroke="#6d8bd3" strokeWidth=".8" />
          <path d="M14 2h12M47 2h10M14 18h10M47 18h8M3 16h7M31 16h12M60 16h12" stroke="#999" />
        </svg>
        <ThumbFooter />
      </Thumb>
      <Thumb n={6} title="SQL Injection" active>
        <Tiny className="pl-[4px] font-bold leading-[5px]" items={["Types of SQL Injection :-"]} />
        <Tiny className="mt-[2px] pl-[9px] leading-[3px]" items={["•  Bypass Authentication Injection.", "•  Union based injection aka Advance SQL.", "•  ERROR BASED SQL Injection.", "•  Blind SQL Injection."]} />
        <Tiny className="mt-[3px] pl-[4px] font-bold leading-[5px]" items={["How to Prevent SQL Injection"]} />
        <Tiny className="mt-[2px] pl-[9px] leading-[3px]" items={["•  Black Listing", "•  White Listing", "•  Prepared Statements", "•  Hardening DB and OS"]} />
        <ThumbFooter />
      </Thumb>
      <Thumb n={7} title="Password Security">
        <Tiny className="pl-[4px] leading-[4px]" items={["Best practices for passwords"]} />
      </Thumb>
    </div>
  );
}

const Bullets = ({ items }: { items: [string, number][] }) => (
  <ul className="mt-[17px] flex flex-col pl-[36px] text-[9.500px] leading-[13.500px]">
    {items.map(([t, w]) => (
      <li key={t} className="flex h-[13.500px]"><span className="w-[13.500px] text-[7px]">•</span><Fit w={w}>{t}</Fit></li>
    ))}
  </ul>
);

function Slide() {
  return (
    <div className="flex h-[278px] w-[364px] shrink-0 flex-col bg-[#f8f6f8] font-[Lato,sans-serif] text-[#26356f]">
      <div className="mt-[5px] flex h-7 justify-center text-[20.500px] leading-7"><Fit w={115}>SQL Injection</Fit></div>
      <div className="mt-[8px] flex h-[13px] pl-[18px] text-[9.500px] font-bold leading-[13px]"><Fit w={103}>Types of SQL Injection : -</Fit></div>
      <Bullets items={[["Bypass Authentication Injection.", 132], ["Union based injection aka Advance SQL.", 164], ["ERROR BASED SQL Injection.", 116], ["Blind SQL Injection.", 80]]} />
      <div className="mt-[18px] flex h-[13px] pl-[18px] text-[9.500px] font-bold leading-[13px]"><Fit w={123}>How to Prevent SQL Injection</Fit></div>
      <Bullets items={[["Black Listing", 50], ["White Listing", 54], ["Prepared Statements", 87], ["Hardening DB and OS", 88]]} />
      <div className="mt-[7px] flex justify-between pl-[7px] pr-[5px] text-[#333]">
        <div className="flex flex-col">
          <Fit w={45} className="text-[7px] leading-[12px]">A Program by:</Fit>
          <Fit w={50} className="mt-[2px] h-[15px] text-[13px] leading-[15px] text-[#ae3c41] font-['Noto_Serif','Liberation_Serif',serif]">Stanford</Fit>
          <Fit w={132} className="text-[8px] leading-[11px]">Center for Professional Development</Fit>
        </div>
        <div className="flex w-[110px] flex-col">
          <Fit w={87} className="text-[7px] leading-[12px]">Delivered and Supported by:</Fit>
          <div className="flex h-[16px] text-[16px] font-extrabold leading-[18px] font-['Open_Sans',sans-serif]">
            <Fit w={44} className="text-[#256fb9]">great</Fit><Fit w={66} className="text-[#3a9fdd]">learning</Fit>
          </div>
          <Fit w={74} className="ml-[18px] text-[8.500px] italic leading-[10px] text-[#777] font-['Liberation_Serif',serif]">Learning for Life</Fit>
        </div>
      </div>
    </div>
  );
}

const ScrollBtn = ({ up }: { up?: boolean }) => (
  <div className="flex h-[10px] w-full shrink-0 items-center justify-center bg-white text-[#666]">
    <Ico d={up ? "M0 4h6L3 0z" : "M0 0h6L3 4z"} box="0 0 6 4" fill="currentColor" sw={0} className="h-[3px] w-[5px]" />
  </div>
);

function Video() {
  return (
    <div className="relative flex h-[479px] w-[852px] flex-col bg-black pt-[13px] font-['Noto_Sans',sans-serif]">
      <TitleBar />
      <Ribbon />
      <div className="flex h-[19px] shrink-0 items-center border-b border-[#dadada] bg-[#f1f1f1] pl-[7px] text-[8px] text-[#555]">
        <div className="flex size-[14px] items-center justify-center rounded-full bg-[#3c72b4] text-white"><Ico d="M2 6l5-4 4 1v4L6 11z" fill="#fff" sw={0} className="size-[9px]" /></div>
        <Fit w={48} className="ml-[6px]">Classification:</Fit>
        <div className="ml-[5px] size-[7px] bg-[#33690d]" />
        <Fit w={23} className="ml-[4px] font-bold text-[#333]">Public</Fit>
        <Ico d="M1 11l1-3 7-7 2 2-7 7z" fill="currentColor" sw={0} className="ml-[7px] size-[8px] text-[#444]" />
        <Ico d="M2 2l8 8M10 2l-8 8" sw={2.500} className="ml-auto mr-[5px] size-[7px]" />
      </div>
      <div className="flex h-[316px] shrink-0 bg-[#e7e6e8]">
        <Thumbs />
        <div className="flex w-[11px] shrink-0 flex-col bg-[#dcdcde] pt-[2px]">
          <ScrollBtn up /><div className="mt-[34px] h-[74px] border border-[#ccc] bg-white" /><div className="mt-auto pb-px"><ScrollBtn /></div>
        </div>
        <div className="ml-[2px] flex w-[723px] flex-col border-l border-[#d4d4d6]">
          <div className="flex h-[282px] border-b border-[#cfcfd1]">
            <div className="w-[128px] shrink-0 pt-[89px]">
              <svg viewBox="0 0 8 13" className="ml-[127px] h-[13px] w-2" fill="#fff" stroke="#666" strokeWidth=".8">
                <path d="M.5.8v9.500l2.200-2 1.500 3.700 1.600-.7-1.600-3.500h3z" />
              </svg>
            </div>
            <div className="ml-[45px] pt-px"><Slide /></div>
            <div className="ml-auto mr-px flex w-[10px] flex-col bg-[#dedee0] pt-[2px]">
              <ScrollBtn up /><div className="mt-[71px] h-[11px] shrink-0 bg-white" /><div className="mt-auto"><ScrollBtn /></div>
              <div className="flex h-[36px] shrink-0 flex-col items-center gap-[4px] bg-[#e7e6e8] pt-[3px] text-[#666]">
                <Ico d="M1 5l3-3 3 3zM1 9l3-3 3 3zM1 1h6" box="0 0 8 9" className="h-[7px] w-[6px]" fill="currentColor" />
                <Ico d="M1 0l3 3 3-3zM1 4l3 3 3-3zM1 8h6" box="0 0 8 9" className="h-[7px] w-[6px]" fill="currentColor" />
              </div>
            </div>
          </div>
          <Fit w={78} className="ml-[6px] mt-[3px] text-[9px] leading-[14px] text-[#666]">Click to add notes</Fit>
        </div>
      </div>
      <div className="flex h-[15px] shrink-0 items-center bg-[#c1c1c5] pl-[3px] text-[7px] leading-[14px] text-[#555]">
        <Fit w={39}>Slide 6 of 17</Fit>
        <Ico d="M1 2l5 1 5-1v8l-5 1-5-1zM6 3v8" className="ml-[9px] size-[9px] text-[#777]" />
        <Fit w={44} className="ml-[9px]">English (India)</Fit>
        <Ico d="M2 8h8M2 10h8M6 1 3 6h6z" className="ml-auto size-[8px]" />
        <Fit w={19} className="ml-[2px]">Notes</Fit>
        <div className="ml-[10px] flex h-[14px] w-5 items-center justify-center bg-[#a9a9ad]"><Ico d="M1 1h10v10H1zM4 1v10M6 4h3M6 7h3" className="size-[9px]" /></div>
        <Ico d="M1 1h4v4H1zM7 1h4v4H7zM1 7h4v4H1zM7 7h4v4H7z" className="ml-[6px] size-[9px]" />
        <Ico d="M1 1h10v9H1zM6 1v10M3 4h2M3 7h2M8 4h2M8 7h2" className="ml-[11px] size-[9px]" />
        <Ico d="M0 1h12M1 1v7h10V1M4 12l2-3 2 3" className="ml-[11px] size-[9px]" />
        <div className="ml-[9px] h-px w-[5px] bg-[#555]" />
        <div className="ml-[4px] flex h-[10px] w-[61px] items-center"><div className="h-px w-[15px] bg-[#999]" /><div className="h-[7px] w-[2px] bg-[#444]" /><div className="h-px grow bg-[#999]" /></div>
        <Ico d="M6 1v10M1 6h10" sw={2} className="ml-[5px] size-[6px]" />
        <Fit w={14} className="ml-[7px]">57%</Fit>
        <Ico d="M1 1h10v10H1zM3 6h6M6 3v6M1 1l3 3M11 1 8 4M1 11l3-3M11 11 8 8" className="ml-[7px] mr-[3px] size-[9px]" />
      </div>
      <div className="absolute inset-x-0 bottom-0 flex h-[30px] items-center text-[#f0f0f0]/80">
        <MdPause size={17} className="ml-[11px]" />
        <MdReplay size={15} className="ml-[25px]" />
        <MdReplay size={15} className="ml-[25px] -scale-x-100" />
        <MdVolumeUp size={17} className="ml-[24px]" />
        <Fit w={26} className="ml-[21px] text-[9px] font-semibold">42:02</Fit>
        <div className="ml-[19px] flex w-[172px] items-center"><div className="h-[2px] grow bg-white" /><div className="-ml-1 size-[8px] rounded-full bg-[#eee]" /></div>
        <Fit w={36} className="ml-[300px] text-[9px] font-semibold">-1:11:03</Fit>
        <Fit w={15} className="ml-[22px] text-[13px] leading-4">1x</Fit>
        <div className="ml-[25px] flex h-[14px] w-[14px] items-center justify-center rounded-[1px] bg-[#dadada]/80 text-[6px] font-semibold text-[#a5a5a5]">HD</div>
        <MdFullscreen size={18} className="ml-[23px]" />
      </div>
    </div>
  );
}

/* ---------- Taskbar ---------- */

const Cell = ({ children, className = "w-[49px]" }: { children: ReactNode; className?: string }) => (
  <div className={`flex h-10 shrink-0 items-center justify-center ${className}`}>{children}</div>
);

function Taskbar() {
  return (
    <div className="flex h-10 shrink-0 bg-gradient-to-r from-[#211f1e] via-[#251a19] via-70% to-[#1f1e1d] font-['Noto_Sans',sans-serif] text-white">
      <div className="flex bg-gradient-to-r from-[#1f1f1f] via-[#232020] to-[#302820]">
        <Cell className="w-12"><svg viewBox="0 0 16 16" className="size-4" fill="#fff"><path d="M0 2.300 6.500 1.400v6.100H0zM7.300 1.300 16 0v7.500H7.300zM0 8.300h6.500v6.200L0 13.600zM7.300 8.300H16V16l-8.700-1.300z" /></svg></Cell>
        <Cell className="w-12"><Ico d="M10.500 1a5 5 0 1 1-.1 0M7 9.500 1 16" box="0 0 17 17" sw={1.400} className="size-[17px]" /></Cell>
        <Cell className="w-12"><div className="size-4 rounded-full border-2 border-white" /></Cell>
        <Cell className="w-12"><Ico d="M1 0v2.500h9.500V0M1 16v-2.500h9.500V16M1 5h9.500v6H1zM14.500 0v3M14.500 7v9M13 4.500h3" box="0 0 17 16" sw={1.200} className="h-4 w-[17px]" /></Cell>
        <Cell className="w-[54px]">
          <svg viewBox="0 0 22 18" className="h-[18px] w-[22px]">
            <path d="M0 0h9l1 2h11v4H0z" fill="#e0a32b" /><path d="M0 3h22v15H0z" fill="#fcd462" />
            <path d="M4 9h14v9h-4v-4H8v4H4z" fill="#3a96dd" />
          </svg>
        </Cell>
        <Cell className="w-[44px]"><FaEdgeLegacy size={21} className="text-[#0a7fdb]" /></Cell>
        <Cell className="w-[51px]">
          <svg viewBox="0 0 24 23" className="h-[23px] w-6">
            <path d="M8 6V3a4 4 0 0 1 8 0v3" fill="none" stroke="#fff" strokeWidth="1.300" /><path d="M0 6h24v16a1 1 0 0 1-1 1H1a1 1 0 0 1-1-1z" fill="#fff" />
            <path d="M6 9h5.500v5H6z" fill="#f25022" /><path d="M12.500 9H18v5h-5.500z" fill="#7fba00" /><path d="M6 15h5.500v5H6z" fill="#00a4ef" /><path d="M12.500 15H18v5h-5.500z" fill="#ffb900" />
          </svg>
        </Cell>
        <Cell className="w-[50px]">
          <svg viewBox="0 0 24 22" className="h-[22px] w-6">
            <path d="M0 8 12 0l12 8v4H0z" fill="#0f5a9e" /><path d="M2 8h20v6l-10 4z" fill="#f3f3f3" />
            <path d="M0 8l12 8L24 8v14H0z" fill="#2aa8ea" /><path d="M24 8v14L9 14z" fill="#1282cf" opacity=".5" />
          </svg>
        </Cell>
      </div>
      <div className="flex w-12 flex-col items-center border-b-2 border-[#76b9ed] bg-[#5b544e] pt-[8px]">
        <svg viewBox="0 0 26 26" className="size-[26px]">
          <circle cx="12" cy="12" r="11" fill="#34a853" />
          <path d="M12 12 2.500 6.500A11 11 0 0 1 21.500 6.500z" fill="#ea4335" /><path d="M12 1a11 11 0 0 1 9.500 5.500H12z" fill="#ea4335" />
          <path d="M12 12h11a11 11 0 0 1-11 11l5-8z" fill="#fbbc04" /><path d="M21.500 6.500A11 11 0 0 1 23 12h-8l-3-5.500z" fill="#fbbc04" />
          <circle cx="12" cy="12" r="5.200" fill="#fff" /><circle cx="12" cy="12" r="4.200" fill="#4285f4" />
          <circle cx="18.500" cy="18.500" r="7.500" fill="#8c8c8c" /><path d="M15 25l2-8 2-1 1-3 2 2-1 4-2 1-1 6z" fill="#111" />
        </svg>
      </div>
      <Cell className="w-[50px]">
        <svg viewBox="0 0 24 24" className="size-6">
          <path d="M12 23A11 11 0 0 1 1 12c0-4 2-6 3-9l3 3 2-1 2 2 4-2c-1-2 0-4 1-5 2 4 7 6 7 12a11 11 0 0 1-11 11z" fill="#ff7139" />
          <path d="M16 0c2 4 7 6 7 12-1 5-4 8-7 9 4-4 3-9-1-13-1-3 0-6 1-8z" fill="#ffd83a" />
          <path d="M1 12a11 11 0 0 0 18 8c-5 2-12 1-13-5-2-4 0-8 0-10L4 3C3 6 1 8 1 12z" fill="#ff3b54" /><circle cx="12" cy="13.500" r="4.500" fill="#7542d6" />
          <path d="M6 9c2-1 4 0 5 1l2 1c-1 2-3 1-4 3-1 1-3-2-3-5z" fill="#ffb13b" />
        </svg>
      </Cell>
      <Cell className="w-[47px]">
        <svg viewBox="0 0 24 24" className="size-[23px]">
          <circle cx="12" cy="12" r="12" fill="#f5b92d" /><path d="M4 3A12 12 0 0 1 24 12c0 4-2 7-4 9 2-8-6-14-16-18z" fill="#6a5be2" /><path d="M0 12A12 12 0 0 1 6 2c2 3 8 3 12 4L4 20a12 12 0 0 1-4-8z" fill="#e8882f" />
          <circle cx="12" cy="12" r="7.500" fill="#fff" /><circle cx="12" cy="10" r="2" fill="#555" /><path d="M11 11h2l.7 5h-3.400z" fill="#555" />
        </svg>
      </Cell>
      <Cell className="w-[50px]">
        <svg viewBox="0 0 24 14" className="h-[14px] w-6" fill="none" strokeWidth="3">
          <path d="M12 7C9 10.500 7.500 11 6 11a4 4 0 0 1 0-8c1.500 0 3 .5 6 4" stroke="#3d4f9e" /><path d="M12 7c3-4.500 4.500-5 6.500-5a4 4 0 0 1 0 9c-2 0-3.500-.5-6.500-4z" stroke="#5a4492" /><path d="M8 10l8-6" stroke="#3d8fd4" />
        </svg>
      </Cell>
      <Cell className="w-[50px]">
        <svg viewBox="0 0 24 24" className="size-6">
          <rect width="24" height="24" rx="3" fill="#f27b2b" />
          <path d="M8.500 6.500a2.700 2.700 0 1 0-1 5c2 .8 2 .8 0 1a2.700 2.700 0 1 0 1 5l2-2.500h3l2 2.500a2.700 2.700 0 1 0 1-5c-2-.6-2-.6 0-1a2.700 2.700 0 1 0-1-5l-2 2.500h-3z" fill="none" stroke="#fff" strokeWidth="2.500" />
        </svg>
      </Cell>
      <div className="flex w-[48px] flex-col items-center">
        <div className="flex h-[38px] w-10 items-center justify-center pt-0.5"><span className="flex size-[22px] items-center justify-center rounded-full bg-[#2cc64f]"><FaWhatsapp size={22} /></span></div>
        <div className="h-[2px] w-10 bg-[#76b9ed]" />
      </div>
      <div className="ml-auto flex items-center">
        <Ico d="M1 7l5-5 5 5" box="0 0 12 8" sw={1.300} className="h-2 w-3" />
        <Ico d="M2 12A11 11 0 0 1 12 2M4.500 12A8 8 0 0 1 12 4.800M7 12a5 5 0 0 1 5-4.500M9.500 12A2.500 2.500 0 0 1 12 10" box="0 0 13 13" className="ml-[12px] size-[13px]" />
        <svg viewBox="0 0 16 11" className="ml-[9px] h-[11px] w-4"><path d="M1 8C0 5 3 4 4 4c1-4 6-4 8-1 3 0 4 3 3 5z" fill="#aaa" /><path d="M3 11c-3 0-3-4 0-4 2-3 5-1 6 0 3-2 7-1 7 2 0 2-2 2-3 2z" fill="#fff" /></svg>
        <Ico d="M.5.5h12v8H.5zM13.500 3v3" box="0 0 15 9" className="ml-[9px] h-[9px] w-[15px]" />
        <div className="-ml-[13px] mr-[9px] h-[5px] w-[4px] bg-white" />
        <Ico d="M1 5h2l3-3v9L3 8H1zM8 4.500c1 1 1 3 0 4M10.500 3c2 2 2 5 0 7M13 1.500c2.500 3 2.500 7 0 10" box="0 0 16 13" className="ml-[8px] h-[13px] w-4" />
        <div className="ml-[7px] flex w-[60px] flex-col items-center text-[12px] leading-[18px]">
          <Fit w={43}>7:31 PM</Fit>
          <Fit w={53}>07-Jun-20</Fit>
        </div>
        <Ico d="M1 1h15v12h-5l-2.500 3L6 13H1z" box="0 0 17 17" sw={1.200} className="ml-[15px] mr-[19px] size-[17px]" />
        <div className="mr-1 h-10 w-px bg-[#5a5a5a]" />
      </div>
    </div>
  );
}

export default function App() {
  return (
    <div className="flex h-[768px] w-[1366px] flex-col overflow-hidden bg-[#fafafb] font-[Lato,sans-serif]">
      <Browser />
      <SiteHeader />
      <div className="flex h-[560px] shrink-0 overflow-hidden pl-16">
        <Sidebar />
        <main className="relative w-[933px] shrink-0 border-r border-[#eceef0] bg-white pl-10">
          <div className="absolute -left-px top-0 flex h-[22px] w-6 items-center justify-center rounded-br-[4px] bg-[#6b78f8] pb-2.5 text-white shadow-md">
            <FaAngleDoubleLeft size={13} />
          </div>
          <div className="flex h-[34px] items-start"><Fit w={449} className="-mt-[12px] text-[24px] leading-[30px] text-[#111]">Introduction to Software Security Lesson 1</Fit></div>
          <Video />
        </main>
        <div className="ml-auto h-[388px] w-1 bg-[#67748b]" />
      </div>
      <Taskbar />
    </div>
  );
}
